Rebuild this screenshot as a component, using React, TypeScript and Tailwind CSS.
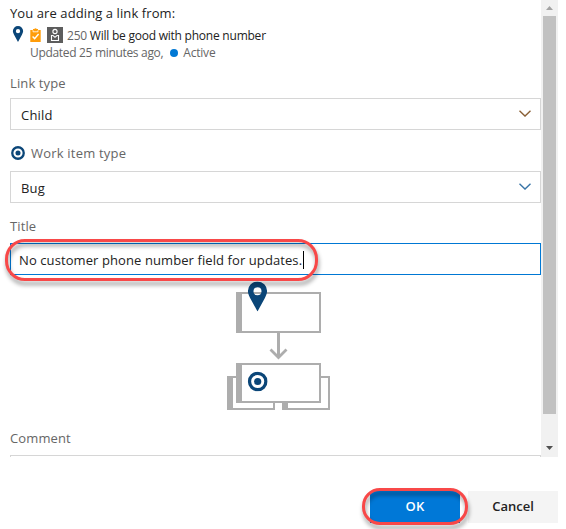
import React from "react";

function Pin({ className }: { className: string }) {
  return (
    <svg className={className} viewBox="0 0 20 30" fill="#0b4678">
      <path
        fillRule="evenodd"
        d="M10 0A9.6 9.6 0 0 0 .4 9.6C.4 12 1.5 14.3 2.6 16.4L10 30l7.4-13.6c1.1-2.1 2.2-4.4 2.2-6.8A9.6 9.6 0 0 0 10 0Zm0 5.8a4 4 0 1 1 0 8 4 4 0 0 1 0-8Z"
      />
    </svg>
  );
}

function Target({ className }: { className: string }) {
  return (
    <svg className={className} viewBox="0 0 20 20">
      <circle cx="10" cy="10" r="8.2" fill="none" stroke="#0b4678" strokeWidth="3.3" />
      <circle cx="10" cy="10" r="3.6" fill="#0b4678" />
    </svg>
  );
}

function Clipboard() {
  return (
    <svg className="ml-[5.5px] mt-[2px] h-[14px] w-[11px] shrink-0" viewBox="0 0 11 14">
      <path d="M.3 2H3V1.1h1.3a1.3 1.3 0 0 1 2.4 0H8V2h2.7v12H.3Z" fill="#ff9d0a" />
      <path d="M3 2.2v1.6h5V2.2" fill="none" stroke="#fff" strokeWidth=".8" />
      <path d="m2.6 8.6 2 2L8.6 6" fill="none" stroke="#fff" strokeWidth="1.4" />
    </svg>
  );
}

function Person() {
  return (
    <svg className="ml-[6.5px] mt-px h-4 w-4 shrink-0" viewBox="0 0 16 16">
      <path d="M0 0h16v16H0z" fill="#5d5d5d" />
      <circle cx="8" cy="4.500" r="2.1" fill="none" stroke="#fff" strokeWidth="1.1" />
      <path d="M5.800 8.500H4.500v5h7v-5h-1.300M5.800 8.300 8 10.300l2.200-2" fill="none" stroke="#fff" strokeWidth="1.1" />
    </svg>
  );
}

function SelectBox({ value, stroke }: { value: string; stroke: string }) {
  return (
    <div className="flex h-8 w-[531px] items-center justify-between border border-[#d6d6d6] pl-[10px] pr-[9px] text-[#222]">
      <span className="pt-[2px] tracking-[0.2px]">{value}</span>
      <svg className="mb-px h-[7px] w-3" viewBox="0 0 12 7" fill="none" stroke={stroke} strokeWidth="1.35">
        <path d="m.5.7 5.500 5.400L11.500.7" />
      </svg>
    </div>
  );
}

function LinkDiagram() {
  return (
    <svg className="ml-[217px] mt-[6px] h-[129px] w-[104px]" viewBox="0 0 104 129">
      <g fill="#fff" stroke="#adadad" strokeWidth="2">
        <path d="M1 96h46v32H1z" />
        <path d="M56 96h46v32H56z" />
      </g>
      <path d="M0 95h6v34H0zM55 95h6v34h-6z" fill="#adadad" />
      <g fill="#fff" stroke="#adadad" strokeWidth="2">
        <path d="M10 12h83v39H10zM10 83h83v38H10z" />
      </g>
      <path d="M9 11h6v41H9zM9 82h6v40H9zM50 52h3v24h-3z" fill="#adadad" />
      <path d="m43.500 68.500 8 8 8-8" fill="none" stroke="#adadad" strokeWidth="2.8" />
      <svg x="20.500" y="0.500" width="20" height="30"><Pin className="h-[30px] w-5" /></svg>
      <svg x="20.700" y="90.500" width="20" height="20"><Target className="h-5 w-5" /></svg>
    </svg>
  );
}

export default function App() {
  return (
    <main className="h-[529px] w-[566px] overflow-hidden bg-white font-['Open_Sans','Noto_Sans',sans-serif] text-[13px] leading-[18px] tracking-[0.12px] text-[#666]">
      <div className="flex h-[457px]">
        <div className="h-[457px] w-[541px] pl-[10px] whitespace-nowrap">
          <div className="h-[26px] pt-[4px] tracking-[0.09px] text-[#222]">You are adding a link from:</div>
          <div className="flex h-[18px] items-start">
            <Pin className="ml-[2px] h-4 w-[12px] shrink-0" />
            <Clipboard />
            <Person />
            <div className="ml-[4px] mt-[2px] text-[12px] leading-4 tracking-[-0.23px]">
              250 <span className="text-[#222]">Will be good with phone number</span>
            </div>
          </div>
          <div className="flex h-[18px] items-center pl-5 text-[12px] tracking-[-0.32px]">
            <span>Updated 25 minutes ago,</span>
            <span className="ml-[7px] mr-[5px] h-2 w-2 rounded-full bg-[#0078d4]" />
            <span className="tracking-[-0.2px]">Active</span>
          </div>
          <div className="h-9 pt-[12px]">Link type</div>
          <SelectBox value="Child" stroke="#8a6036" />
          <div className="flex h-[41px] items-center pt-[5px]">
            <Target className="ml-px h-[14px] w-[14px]" />
            <span className="ml-[6px] tracking-[0.2px]">Work item type</span>
          </div>
          <SelectBox value="Bug" stroke="#3975a7" />
          <div className="h-10 pt-[14px]">Title</div>
          <div className="relative flex h-8 w-[531px] items-center border border-[#0078d4] pl-[8px] text-[#222]">
            <span className="pt-[2px] tracking-[0.09px]">No customer phone number field for updates.</span>
            <span className="absolute left-[292px] top-[7px] h-[18px] w-px bg-black" />
            <div className="absolute -left-[6px] -top-[5px] h-[42px] w-[313px] rounded-[20px] border-[3px] border-[#f84848] drop-shadow-[1px_4px_2px_rgba(0,0,0,0.4)]" />
          </div>
          <LinkDiagram />
          <div className="h-[45px] pt-[19px]">Comment</div>
          <div className="h-[2px] border-x border-t border-[#d6d6d6]" />
        </div>
        <div className="flex w-[17px] flex-col items-center justify-between bg-[#f1f1f1]">
          <svg className="h-4 w-[17px]" viewBox="0 0 17 16"><path d="m5 10 3.500-4L12 10Z" fill="#a3a3a3" /></svg>
          <div className="h-[398px] w-[13px] bg-[#c1c1c1]" />
          <svg className="h-[43px] w-[17px]" viewBox="0 0 17 43"><path d="m5 32 3.500 4L12 32Z" fill="#505050" /></svg>
        </div>
      </div>
      <div className="mt-[34px] flex w-[558px] justify-end gap-2 font-semibold tracking-normal">
        <div className="relative flex h-8 w-[90px] items-center justify-center bg-[#0078d7] pb-[2px] text-white">
          <span className="tracking-[0.3px]">OK</span>
          <div className="absolute -left-[8px] -top-[3px] h-[37px] w-[106px] rounded-[18px] border-[3px] border-[#f84848] drop-shadow-[1px_4px_2px_rgba(0,0,0,0.4)]" />
        </div>
        <div className="flex h-8 w-[90px] items-center justify-center bg-[#f4f4f4] pb-[2px] text-[#222]">Cancel</div>
      </div>
    </main>
  );
}
